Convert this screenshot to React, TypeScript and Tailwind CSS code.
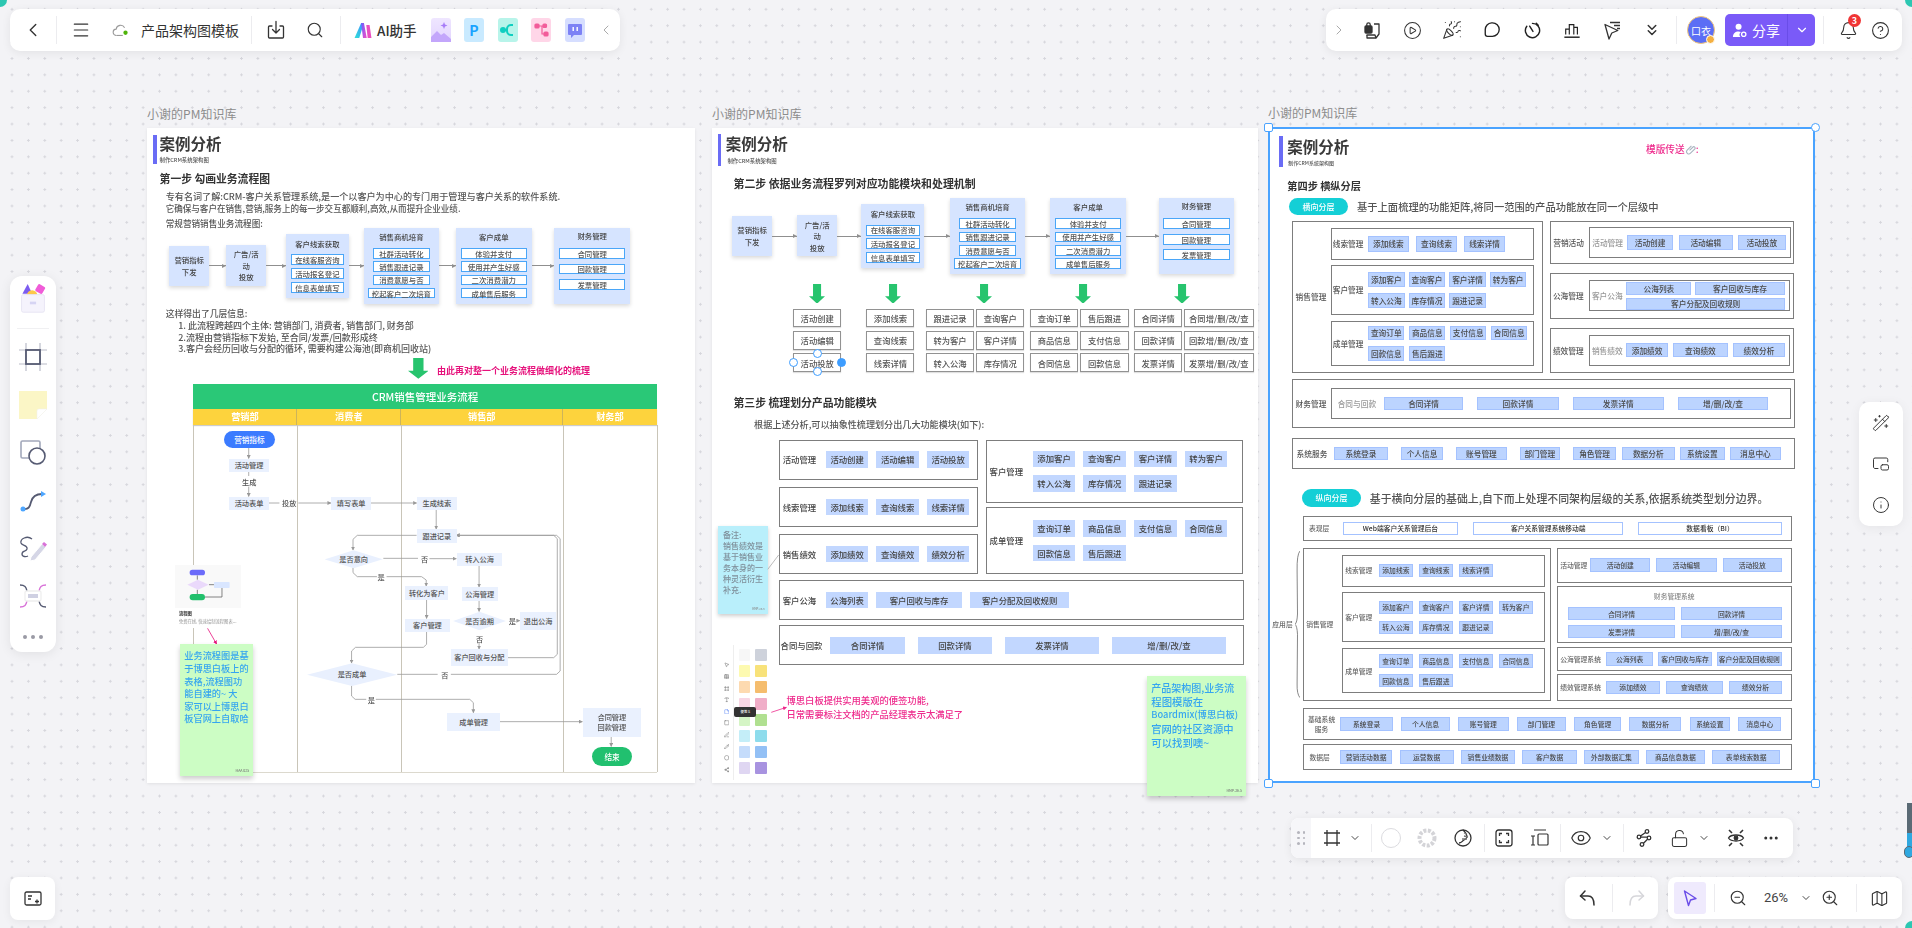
import type { ReactNode } from "react";
import {
  Bell, ChevronDown, ChevronLeft, ChevronRight, ChevronsDown, Circle, CircleHelp, CirclePlay, Ellipsis, Eye, Frame, Info,
  LockOpen, Map as MapIcon, Menu, MousePointer2, PartyPopper, Pencil, PenLine, PictureInPicture2, Search, Share2, Square, StickyNote, Table, Type, WandSparkles, ZoomIn, ZoomOut,
} from "lucide-react";

/* ---------- canvas helpers: only diagram nodes and notes use these ---------- */
type Space = { ox: number; oy: number; sx: number; sy: number };
const laneSpace: Space = { ox: -150 / 2.8, oy: -14 / 3, sx: 2.8, sy: 3 };
const cardSpace: Space = { ox: 12.9, oy: 412, sx: 3, sy: 3 };
const noteSpace: Space = { ox: -6 / 2.851, oy: 262, sx: 2.851, sy: 3 };

const place = (s: Space, r: number[]) => ({
  left: s.ox + r[0] / s.sx,
  top: s.oy + r[1] / s.sy,
  width: (r[2] - r[0]) / s.sx,
  height: (r[3] - r[1]) / s.sy,
});

function N({ s, r, className = "", children }: { s: Space; r: number[]; className?: string; children?: ReactNode }) {
  return (
    <div className={`absolute flex items-center justify-center whitespace-nowrap ${className}`} style={place(s, r)}>
      {children}
    </div>
  );
}

function C({ s, x, y, className = "", children }: { s: Space; x: number; y: number; className?: string; children: ReactNode }) {
  return (
    <div className={`absolute -translate-x-1/2 -translate-y-1/2 whitespace-nowrap ${className}`} style={{ left: s.ox + x / s.sx, top: s.oy + y / s.sy }}>
      {children}
    </div>
  );
}

function Wires({ s, lines, color = "#999", width = 0.8 }: { s: Space; lines: { p: number[]; a?: boolean }[]; color?: string; width?: number }) {
  const id = `arrow-${Math.round(s.oy)}-${color.slice(1)}`;
  return (
    <svg className="absolute left-0 top-0 w-full h-full overflow-visible pointer-events-none">
      <defs>
        <marker id={id} markerWidth="4" markerHeight="4" refX="3.4" refY="2" orient="auto" markerUnits="userSpaceOnUse">
          <path d="M0 0L4 2L0 4z" fill={color} />
        </marker>
      </defs>
      {lines.map((l, i) => {
        const pts: string[] = [];
        for (let k = 0; k < l.p.length; k += 2) pts.push(`${s.ox + l.p[k] / s.sx},${s.oy + l.p[k + 1] / s.sy}`);
        return <polyline key={i} points={pts.join(" ")} fill="none" stroke={color} strokeWidth={width} strokeLinejoin="round" markerEnd={l.a ? `url(#${id})` : undefined} />;
      })}
    </svg>
  );
}

/* ---------- shared frame pieces ---------- */
function DownArrow({ className }: { className: string }) {
  return (
    <svg viewBox="0 0 100 100" preserveAspectRatio="none" className={`shrink-0 ${className}`}>
      <polygon points="25,0 75,0 75,62 100,62 50,100 0,62 25,62" fill="#27c46e" />
    </svg>
  );
}

function Header({ className, bar, gap, title, sub, children }: { className: string; bar: string; gap: string; title: string; sub: string; children?: ReactNode }) {
  return (
    <div className={`flex items-start ${className}`}>
      <div className={`w-[3.600px] shrink-0 bg-[#6a6cf5] ${bar}`} />
      <div className={`flex flex-col ${gap}`}>
        <div className={`flex items-center text-[15.5px] font-bold text-[#3a3a3a] whitespace-nowrap ${title}`}>案例分析</div>
        <div className={`h-2 flex items-center text-[#555] whitespace-nowrap ${sub}`}>制作CRM系统架构图</div>
      </div>
      {children}
    </div>
  );
}

function Link({ w }: { w: string }) {
  return (
    <div className={`relative h-[0.8px] shrink-0 bg-[#8f8f8f] ${w}`}>
      <div className="absolute right-0 top-1/2 -translate-y-1/2 border-l-[4px] border-l-[#8f8f8f] border-y-[2px] border-y-transparent" />
    </div>
  );
}

const flowCard = "bg-[#d6e4ff] shadow-[0_2px_4px_rgba(0,0,0,0.15)]";
const flowSub = "flex items-center justify-center bg-white border-[1.2px] border-[#4aa6f8] whitespace-nowrap";

function FlowRow({ className, gaps }: { className: string; gaps: string[] }) {
  const tall = `${flowCard} w-[75.600px] h-[76px] flex flex-col items-center`;
  return (
    <div className={`flex items-center text-[7.4px] text-[#444] ${className}`}>
      <div className={`${flowCard} w-10 h-[40.300px] flex items-center justify-center text-center leading-[11.5px]`}>营销指标<br />下发</div>
      <Link w={gaps[0]} />
      <div className={`${flowCard} w-[40.500px] h-[41px] flex items-center justify-center text-center leading-[11.5px]`}>广告/活<br />动<br />投放</div>
      <Link w={gaps[1]} />
      <div className={`${flowCard} w-[63.200px] h-[63.700px] flex flex-col items-center gap-[2.700px]`}>
        <div className="h-[17.700px] shrink-0 flex items-center pt-[2px]">客户线索获取</div>
        {["在线客服咨询", "活动报名登记", "信息表单填写"].map((t) => (
          <div key={t} className={`${flowSub} w-[53.300px] h-[11px] text-[#555]`}>{t}</div>
        ))}
      </div>
      <Link w={gaps[2]} />
      <div className={`${tall} gap-[2.500px]`}>
        <div className="h-[18px] shrink-0 flex items-center">销售商机培育</div>
        {["社群活动转化", "销售跟进记录", "消费意愿与否"].map((t) => (
          <div key={t} className={`${flowSub} w-[57.500px] h-[10.700px] text-[#555]`}>{t}</div>
        ))}
        <div className={`${flowSub} w-[66.500px] h-[10.700px] text-[#555]`}>挖起客户二次培育</div>
      </div>
      <Link w={gaps[3]} />
      <div className={`${tall} gap-[2.500px]`}>
        <div className="h-[18px] shrink-0 flex items-center">客户成单</div>
        {["体验并支付", "使用并产生好感", "二次消费潜力", "成单售后服务"].map((t) => (
          <div key={t} className={`${flowSub} w-[66.400px] h-[10.700px] text-[#555]`}>{t}</div>
        ))}
      </div>
      <Link w={gaps[4]} />
      <div className={`${tall} gap-[4.800px]`}>
        <div className="h-[15.700px] shrink-0 flex items-center">财务管理</div>
        {["合同管理", "回款管理", "发票管理"].map((t) => (
          <div key={t} className={`${flowSub} w-[66.400px] h-[10.700px] text-[#555]`}>{t}</div>
        ))}
      </div>
    </div>
  );
}

function Chips({ names, ws, cls, gap }: { names: string; ws: string | string[]; cls: string; gap: string }) {
  return (
    <div className={`flex ${gap}`}>
      {names.split(" ").map((n, i) => (
        <div key={n} className={`flex items-center justify-center shrink-0 whitespace-nowrap ${Array.isArray(ws) ? ws[i] : ws} ${cls}`}>{n}</div>
      ))}
    </div>
  );
}

function Box({ className, label, labelCls, children }: { className: string; label: ReactNode; labelCls: string; children?: ReactNode }) {
  return (
    <div className={`flex items-center shrink-0 bg-white ${className}`}>
      <div className={`shrink-0 whitespace-nowrap ${labelCls}`}>{label}</div>
      {children}
    </div>
  );
}

const FrameLabel = () => <div className="absolute left-0 -top-[23px] text-[12px] text-[#8c8c8c] whitespace-nowrap font-normal">小谢的PM知识库</div>;
const frameBody = "relative h-full flex flex-col blur-[0.3px] font-medium";
const stepCls = "h-[14px] flex items-center font-semibold text-[#333] whitespace-nowrap";

const mod2 = "bg-[#c2d7ff] text-[8.400px] text-[#444]";
const box2 = "border-[1.2px] border-[#7d7d7d]";
const lab2 = "text-[8.400px] text-[#444]";
const fnBox = "h-[18.700px] flex items-center justify-center bg-white border-[1.2px] border-[#929292] shadow-[0_1px_1px_rgba(0,0,0,0.12)] text-[8.300px] text-[#555] whitespace-nowrap";

const box3 = "border border-[#7d7d7d]";
const mod3 = "bg-[#bcd4ff] border border-[#a4c2ff] text-[7.700px] text-[#4a4a4a]";
const mod3b = "bg-[#bcd4ff] border border-[#a4c2ff] text-[6.800px] text-[#4a4a4a]";
const lab3 = "text-[7.700px] text-[#555]";
const lab3g = "text-[7.700px] text-[#999]";
const lab3b = "text-[6.800px] text-[#666]";

/* ---------- first frame: business flow ---------- */
const laneFlow = "bg-[#eaf1fe] text-[7.200px] text-[#555]";
const laneDiamond = "bg-[#e9f0fe] text-[7.200px] text-[#555] [clip-path:polygon(50%_0,100%_50%,50%_100%,0_50%)]";
const laneWord = "text-[7.200px] text-[#555]";

function SwimLane() {
  const s = laneSpace;
  return (
    <div className="relative ml-[46.400px] mt-[5.300px] w-[463.200px] h-[388.700px] flex flex-col border-b border-b-[#dcd9ce]">
      <div className="h-[24.700px] flex items-center justify-center bg-[#2ac877] text-[10.500px] text-white">CRM销售管理业务流程</div>
      <div className="h-[16.300px] grid grid-cols-[103.900px_104px_161.800px_93.500px] bg-[#fdd33d] shadow-[0_1px_1px_rgba(0,0,0,0.2)] text-[9.200px] font-bold text-white">
        <div className="flex items-center justify-center border-r border-r-[#cdb45a]">营销部</div>
        <div className="flex items-center justify-center border-r border-r-[#cdb45a]">消费者</div>
        <div className="flex items-center justify-center border-r border-r-[#cdb45a]">销售部</div>
        <div className="flex items-center justify-center">财务部</div>
      </div>
      <div className="flex-1 grid grid-cols-[103.900px_104px_161.800px_93.500px] border-l border-l-[#c9c5b8]">
        <div className="border-r border-r-[#c9c5b8]" />
        <div className="border-r border-r-[#c9c5b8]" />
        <div className="border-r border-r-[#c9c5b8]" />
        <div className="border-r border-r-[#c9c5b8]" />
      </div>
      <Wires
        s={s}
        lines={[
          { p: [306, 206, 306, 237], a: true }, { p: [306, 277, 306, 290] }, { p: [306, 322, 306, 351], a: true },
          { p: [361, 371, 392, 371] }, { p: [445, 371, 536, 371], a: true }, { p: [647, 371, 776, 371], a: true },
          { p: [831, 391, 831, 449], a: true }, { p: [776, 468, 610, 468, 598, 480, 598, 512], a: true },
          { p: [683, 537, 780, 537] }, { p: [812, 538, 887, 538], a: true }, { p: [951, 559, 951, 623], a: true },
          { p: [598, 566, 598, 580, 610, 592, 665, 592] }, { p: [692, 592, 790, 592, 803, 602, 803, 620], a: true },
          { p: [951, 664, 951, 696], a: true }, { p: [804, 660, 804, 717], a: true }, { p: [1057, 724, 1065, 724], a: true },
          { p: [951, 790, 951, 809], a: true }, { p: [804, 758, 804, 795, 795, 804, 605, 804, 594, 815, 594, 851], a: true },
          { p: [1030, 835, 1160, 835, 1170, 825, 1170, 478, 1160, 468, 887, 468], a: true },
          { p: [722, 885, 835, 885] }, { p: [872, 885, 1168, 885, 1178, 875, 1178, 478, 1168, 468, 887, 468], a: true },
          { p: [594, 919, 594, 950, 604, 960, 635, 960] }, { p: [662, 960, 925, 960, 935, 970, 935, 1000], a: true },
          { p: [1009, 1027, 1240, 1027], a: true }, { p: [1321, 1072, 1321, 1101], a: true },
        ]}
      />
      <N s={s} r={[236, 155, 377, 206]} className="bg-[#3b7bff] rounded-full text-[7.600px] text-white">营销指标</N>
      <N s={s} r={[250, 237, 361, 277]} className={laneFlow}>活动管理</N>
      <C s={s} x={306} y={307} className={laneWord}>生成</C>
      <N s={s} r={[250, 351, 361, 391]} className={laneFlow}>活动表单</N>
      <C s={s} x={418} y={371} className={laneWord}>投放</C>
      <N s={s} r={[536, 351, 647, 391]} className={laneFlow}>填写表单</N>
      <N s={s} r={[776, 351, 887, 391]} className={laneFlow}>生成线索</N>
      <N s={s} r={[776, 449, 887, 489]} className={laneFlow}>跟进记录</N>
      <N s={s} r={[517, 512, 680, 566]} className={laneDiamond}>是否意向</N>
      <C s={s} x={797} y={538} className={laneWord}>否</C>
      <N s={s} r={[887, 519, 1015, 559]} className={laneFlow}>转入公海</N>
      <C s={s} x={675} y={592} className={laneWord}>是</C>
      <N s={s} r={[743, 620, 864, 660]} className={laneFlow}>转化为客户</N>
      <N s={s} r={[901, 623, 1002, 664]} className={laneFlow}>公海管理</N>
      <N s={s} r={[877, 696, 1025, 752]} className={laneDiamond}>是否逾期</N>
      <C s={s} x={1043} y={724} className={laneWord}>是</C>
      <N s={s} r={[1065, 696, 1165, 752]} className={laneFlow}>退出公海</N>
      <C s={s} x={951} y={778} className={laneWord}>否</C>
      <N s={s} r={[743, 717, 867, 758]} className={laneFlow}>客户管理</N>
      <N s={s} r={[871, 809, 1030, 860]} className={laneFlow}>客户回收与分配</N>
      <N s={s} r={[468, 851, 720, 919]} className={laneDiamond}>是否成单</N>
      <C s={s} x={854} y={885} className={laneWord}>否</C>
      <C s={s} x={648} y={960} className={laneWord}>是</C>
      <N s={s} r={[860, 1000, 1009, 1055]} className={laneFlow}>成单管理</N>
      <N s={s} r={[1240, 984, 1403, 1072]} className={`${laneFlow} text-center leading-[10.500px]`}>合同管理<br />回款管理</N>
      <N s={s} r={[1267, 1101, 1377, 1160]} className="bg-[#21c06f] rounded-[10px] text-[7.600px] text-white">结束</N>
    </div>
  );
}

function FrameOne() {
  return (
    <div className="absolute left-[147.100px] top-[128px] w-[547.500px] h-[655px] bg-white shadow-[0_1px_3px_rgba(0,0,0,0.08)]">
      <FrameLabel />
      <div className={frameBody}>
        <Header className="ml-[6.100px] mt-[7px] gap-[2.800px]" bar="h-[29.300px]" gap="gap-[4.400px]" title="h-[16.600px]" sub="text-[5.400px]" />
        <div className={`${stepCls} ml-[12.500px] mt-[7px] text-[10.800px]`}>第一步 勾画业务流程图</div>
        <div className="ml-[18.600px] mt-[4.700px] flex flex-col text-[#555] whitespace-nowrap leading-[12px]">
          <div className="text-[9.100px]">专有名词了解:CRM-客户关系管理系统,是一个以客户为中心的专门用于管理与客户关系的软件系统.</div>
          <div className="text-[8.550px]">它确保与客户在销售,营销,服务上的每一步交互都顺利,高效,从而提升企业业绩.</div>
        </div>
        <div className="ml-[18.600px] mt-[5.700px] h-2 flex items-center text-[8.600px] text-[#555] whitespace-nowrap">常规营销销售业务流程图:</div>
        <FlowRow className="ml-[22.100px]" gaps={["w-[16.800px]", "w-[19.300px]", "w-[14.600px]", "w-[16.800px]", "w-[22.900px]"]} />
        <div className="ml-[18.600px] mt-[5px] h-[10px] flex items-center text-[8.800px] text-[#555] whitespace-nowrap">这样得出了几层信息:</div>
        <div className="ml-[31.100px] mt-[1.100px] flex flex-col text-[9px] leading-[11.800px] text-[#555] whitespace-nowrap">
          <div>1. 此流程跨越四个主体: 营销部门, 消费者, 销售部门, 财务部</div>
          <div>2.流程由营销指标下发始, 至合同/发票/回款形成终</div>
          <div>3.客户会经历回收与分配的循环, 需要构建公海池(即商机回收站)</div>
        </div>
        <div className="ml-[260.700px] mt-[3.200px] flex items-center gap-[8.600px]">
          <DownArrow className="w-[20.700px] h-[20.700px]" />
          <div className="mt-[5px] text-[9px] font-bold text-[#e6127c] whitespace-nowrap">由此再对整一个业务流程做细化的梳理</div>
        </div>
        <SwimLane />

        {/* pasted template card, lies over the lane */}
        <div className="absolute left-[26.200px] top-[437.300px] w-[70px] h-[63px] bg-white flex flex-col items-center">
          <svg viewBox="0 0 199 128" className="w-[66.300px] h-[42.700px] shrink-0 bg-[#f9f9f9]">
            <path d="M67 31V44M67 74V87M102 59H117M141 69V96H90" fill="none" stroke="#666" strokeWidth="2.400" />
            <rect x="44" y="14" width="46" height="17" rx="8" fill="#6c6cfa" />
            <polygon points="69,44 101,59 69,74 37,59" fill="#ead9fb" />
            <rect x="117" y="51" width="47" height="18" rx="2" fill="#d9e6ff" />
            <rect x="44" y="87" width="46" height="19" rx="9" fill="#22c06c" />
          </svg>
          <div className="self-start ml-[5.600px] mt-[3.500px] text-[4.300px] leading-[5px] font-bold text-[#333]">流程图</div>
          <div className="self-start ml-[5.600px] mt-[3px] text-[4.300px] leading-[5px] text-[#aaa] whitespace-nowrap">免费在线, 快速绘制流程图表...</div>
        </div>
        <Wires s={cardSpace} color="#e6127c" lines={[{ p: [143, 265, 170, 312], a: true }]} />
        <div className="absolute left-[32.900px] top-[516.300px] w-[73.300px] h-[131.700px] bg-[#ccfdc4] shadow-[0_3px_5px_rgba(0,0,0,0.2)] flex flex-col pl-[4.300px] pt-[5.200px] text-[9.200px] leading-[12.600px] text-[#35a5f0]">
          <div>业务流程图是基</div>
          <div>于博思白板上的</div>
          <div>表格,流程图功</div>
          <div>能自建的~ 大</div>
          <div>家可以上博思白</div>
          <div>板官网上自取哈</div>
          <div className="mt-auto self-end mr-[4px] mb-[3px] text-[3.500px] leading-[4px] text-[#777]">HAA 025</div>
        </div>
      </div>
    </div>
  );
}

/* ---------- second frame: modules ---------- */
function FnColumn({ names, w }: { names: string; w: string }) {
  return (
    <div className={`flex flex-col gap-[3.700px] ${w}`}>
      {names.split(" ").map((n) => (
        <div key={n} className={fnBox}>{n}</div>
      ))}
    </div>
  );
}

const paletteTools = [MousePointer2, Table, Frame, Type, StickyNote, Square, PenLine, Pencil, Circle, Share2];
const swatches = [
  "bg-[#f7f7f7]", "bg-[#ced2db]", "bg-[#fdfab0]", "bg-[#f8e27a]", "bg-[#fddab0]", "bg-[#f5bd6e]", "bg-[#f8d6e4]", "bg-[#f0aec8]",
  "bg-[#d5f5c5]", "bg-[#b0e090]", "bg-[#c4eef8]", "bg-[#8edcec]", "bg-[#c5dcfb]", "bg-[#93c0f5]", "bg-[#dfd6f2]", "bg-[#a893e0]",
];

function Handle({ className }: { className: string }) {
  return <div className={`absolute w-[9px] h-[9px] rounded-full border border-[#3d9dff] ${className}`} />;
}

function FrameTwo() {
  const chip3 = `${mod2} h-[16.300px]`;
  return (
    <div className="absolute left-[712.100px] top-[128px] w-[546px] h-[655px] bg-white shadow-[0_1px_3px_rgba(0,0,0,0.08)]">
      <FrameLabel />
      <div className={frameBody}>
        <Header className="ml-[5.600px] mt-[6.300px] gap-[4.500px]" bar="h-[31.700px]" gap="gap-[3px]" title="h-[19.400px]" sub="text-[5.400px] ml-[1.700px]" />
        <div className={`${stepCls} ml-[21.400px] mt-[9.700px] text-[10.900px]`}>第二步 依据业务流程罗列对应功能模块和处理机制</div>
        <FlowRow className="ml-5 mt-[8.300px]" gaps={["w-[24.900px]", "w-[23.800px]", "w-[25.300px]", "w-[25px]", "w-[32.600px]"]} />

        <div className="ml-[81.400px] mt-[9.700px] flex items-start">
          <div className="flex flex-col gap-[5.300px]">
            <DownArrow className="ml-[15.400px] w-[16.100px] h-[19.700px]" />
            <div className="relative w-[47.400px]">
              <FnColumn names="活动创建 活动编辑 活动投放" w="w-[47.400px]" />
              <Handle className="left-[19.500px] top-[40.300px] bg-white" />
              <Handle className="-left-[4.500px] top-[49.800px] bg-white" />
              <Handle className="-right-[5px] top-[49.800px] bg-[#3d9dff]" />
              <Handle className="left-[19.500px] top-[58.700px] bg-white" />
            </div>
          </div>
          <div className="ml-[25.600px] flex flex-col gap-[5.300px]">
            <DownArrow className="ml-[18.600px] w-[16.100px] h-[19.700px]" />
            <FnColumn names="添加线索 查询线索 线索详情" w="w-[48px]" />
          </div>
          <div className="ml-[11.900px] flex flex-col gap-[5.300px]">
            <DownArrow className="ml-[49.800px] w-[16.100px] h-[19.700px]" />
            <div className="flex gap-[2.500px]">
              <FnColumn names="跟进记录 转为客户 转入公海" w="w-[47.400px]" />
              <FnColumn names="查询客户 客户详情 库存情况" w="w-[48px]" />
            </div>
          </div>
          <div className="ml-[6px] flex flex-col gap-[5.300px]">
            <DownArrow className="ml-[44.500px] w-[16.100px] h-[19.700px]" />
            <div className="flex gap-[2.100px]">
              <FnColumn names="查询订单 商品信息 合同信息" w="w-[48px]" />
              <FnColumn names="售后跟进 支付信息 回款信息" w="w-[48.400px]" />
            </div>
          </div>
          <div className="ml-[5.600px] flex flex-col gap-[5.300px]">
            <DownArrow className="ml-10 w-[16.100px] h-[19.700px]" />
            <div className="flex gap-[2.100px]">
              <FnColumn names="合同详情 回款详情 发票详情" w="w-[47.700px]" />
              <FnColumn names="合同增/删/改/查 回款增/删/改/查 发票增/删/改/查" w="w-[69.400px]" />
            </div>
          </div>
        </div>

        <div className={`${stepCls} ml-[21.400px] mt-[23.500px] text-[10.850px]`}>第三步 梳理划分产品功能模块</div>
        <div className="ml-[42px] mt-[9.600px] h-3 flex items-center text-[9.100px] text-[#555] whitespace-nowrap">根据上述分析,可以抽象性梳理划分出几大功能模块(如下):</div>

        <div className="ml-[66.600px] mt-[8.400px] flex gap-2">
          <div className="w-[198.900px] flex flex-col gap-[7.300px]">
            {[["活动管理", "活动创建 活动编辑 活动投放"], ["线索管理", "添加线索 查询线索 线索详情"], ["销售绩效", "添加绩效 查询绩效 绩效分析"]].map((m) => (
              <Box key={m[0]} className={`h-10 ${box2} pl-[3px]`} label={m[0]} labelCls={`w-[43.200px] ${lab2}`}>
                <Chips names={m[1]} ws="w-[42.500px]" cls={chip3} gap="gap-2" />
              </Box>
            ))}
          </div>
          <div className="w-[257.800px] flex flex-col gap-[4.700px]">
            <Box className={`h-[63px] ${box2} pl-[3px]`} label="客户管理" labelCls={`w-[43.200px] ${lab2}`}>
              <div className="flex flex-col gap-[8.300px]">
                <Chips names="添加客户 查询客户 客户详情 转为客户" ws="w-[42.500px]" cls={chip3} gap="gap-[8.200px]" />
                <Chips names="转入公海 库存情况 跟进记录" ws="w-[42.500px]" cls={chip3} gap="gap-[8.200px]" />
              </div>
            </Box>
            <Box className={`h-[67px] ${box2} pl-[3px]`} label="成单管理" labelCls={`w-[43.200px] ${lab2}`}>
              <div className="flex flex-col gap-[8px]">
                <Chips names="查询订单 商品信息 支付信息 合同信息" ws="w-[42.500px]" cls={chip3} gap="gap-[8.200px]" />
                <Chips names="回款信息 售后跟进" ws="w-[42.500px]" cls={chip3} gap="gap-[8.200px]" />
              </div>
            </Box>
          </div>
        </div>
        <Box className={`ml-[66.600px] mt-[6px] w-[465.500px] h-10 ${box2} pl-[3px]`} label="客户公海" labelCls={`w-[43.200px] ${lab2}`}>
          <Chips names="公海列表 客户回收与库存 客户分配及回收规则" ws={["w-[42.400px]", "w-[85.200px]", "w-[99.600px]"]} cls={chip3} gap="gap-[8.200px]" />
        </Box>
        <Box className={`ml-[66.600px] mt-[5px] w-[465.500px] h-10 ${box2} pl-[0.900px]`} label="合同与回款" labelCls={`w-[49.800px] ${lab2}`}>
          <Chips names="合同详情 回款详情 发票详情 增/删/改/查" ws={["w-[74.400px]", "w-[74.400px]", "w-[93.700px]", "w-[114.300px]"]} cls={`${mod2} h-[17px]`} gap="gap-[13px]" />
        </Box>

        {/* notes pinned on the board */}
        <div className="absolute left-[6px] top-[397.700px] w-[49.800px] h-[88.300px] bg-[#b9effb] shadow-[0_2px_4px_rgba(0,0,0,0.2)] flex flex-col pl-[4.900px] pt-[4.500px] text-[8px] leading-[10.900px] text-[#7f8f9a] whitespace-nowrap">
          <div>备注:</div>
          <div>销售绩效是</div>
          <div>基于销售业</div>
          <div>务本身的一</div>
          <div>种灵活衍生</div>
          <div>补充.</div>
          <div className="mt-auto self-end mr-[3px] mb-[3px] text-[2.800px] leading-[3px] text-[#888]">HMP-26.5</div>
        </div>
        <Wires s={noteSpace} color="#aaa" lines={[{ p: [165, 538, 196, 495] }]} />

        <div className="absolute left-[8.400px] top-[517px] w-[50px] h-[135px] bg-white flex">
          <div className="relative w-[13.300px] border-r border-r-[#eee] flex flex-col items-center pt-[17.200px] gap-[6.170px] text-[#666]">
            {paletteTools.map((Icon, i) => (
              <Icon key={i} size={5.5} strokeWidth={2} className={i === 4 ? "text-[#4a7bf5]" : ""} />
            ))}
            <div className="absolute left-[14px] top-[62.300px] w-[21.700px] h-[9.300px] bg-[#333] rounded-[2px] flex items-center justify-center text-[3.400px] text-white whitespace-nowrap z-10">便签 S</div>
          </div>
          <div className="grid grid-cols-[11.500px_11.500px] auto-rows-[12px] gap-x-[4.900px] gap-y-[4.200px] pl-[4.900px] pt-1">
            {swatches.map((c) => (
              <div key={c} className={`${c} rounded-[1px]`} />
            ))}
          </div>
        </div>

        <Wires s={noteSpace} color="#ee2a8c" lines={[{ p: [175, 967, 218, 952], a: true }]} />
        <div className="absolute left-[74.400px] top-[565px] flex flex-col text-[9.300px] leading-[14px] text-[#ee2a8c] whitespace-nowrap">
          <div>博思白板提供实用美观的便签功能,</div>
          <div>日常需要标注文档的产品经理表示太满足了</div>
        </div>

        <div className="absolute left-[435px] top-[548px] w-[98.900px] h-[120px] bg-[#ccfdc4] shadow-[0_3px_5px_rgba(0,0,0,0.2)] flex flex-col pl-[4.200px] pt-[4.800px] leading-[13.700px] text-[#35a5f0] whitespace-nowrap">
          <div className="text-[10px]">产品架构图,业务流</div>
          <div className="text-[10.400px]">程图模版在</div>
          <div className="text-[9.300px]">Boardmix(博思白板)</div>
          <div className="text-[10.300px]">官网的社区资源中</div>
          <div className="text-[10.400px]">可以找到噢~</div>
          <div className="mt-auto self-end mr-[4px] mb-[3px] text-[3.400px] leading-[4px] text-[#777]">HMP-26.5</div>
        </div>
      </div>
    </div>
  );
}

/* ---------- third frame: layers ---------- */
function FrameThree() {
  const corner = "absolute w-[9px] h-[9px] bg-white border border-[#4aa3ff]";
  return (
    <div className="absolute left-[1268px] top-[127.300px] w-[547px] h-[656px] bg-white">
      <FrameLabel />
      <div className={frameBody}>
        <Header className="ml-[11px] mt-[9px] gap-[4.700px]" bar="h-[31px]" gap="gap-[2px]" title="h-5" sub="text-[5px] ml-px">
          <div className="ml-[292px] mt-[6px] flex items-center text-[9.700px] text-[#ee2a8c] whitespace-nowrap">
            模版传送
            <svg viewBox="0 0 12 12" className="w-[11px] h-[11px]" fill="none" stroke="#a8b4c0" strokeWidth="1.2">
              <path d="M5 7l4-4a1.6 1.6 0 0 1 2 2L6 10a2.4 2.4 0 0 1-3.6-3.3L7 2" />
            </svg>
            :
          </div>
        </Header>
        <div className={`${stepCls} ml-[19.300px] mt-[11px] text-[10.200px]`}>第四步 横纵分层</div>
        <div className="ml-[20.700px] mt-[6px] flex items-center gap-[8.700px]">
          <div className="w-[59.600px] h-[17px] rounded-full bg-[#14cfd6] flex items-center justify-center text-[8px] text-white">横向分层</div>
          <div className="text-[10.300px] text-[#555] whitespace-nowrap">基于上面梳理的功能矩阵,将同一范围的产品功能放在同一个层级中</div>
        </div>

        <div className="ml-6 mt-[5.300px] flex gap-[6.500px]">
          <Box className={`w-[251.400px] h-[152.700px] ${box3} pl-[2.600px]`} label="销售管理" labelCls={`w-[35px] ${lab3}`}>
            <div className="flex flex-col gap-[5.700px]">
              <Box className={`w-[203.600px] h-[31.700px] ${box3} pl-[1.100px]`} label="线索管理" labelCls={`w-[35.400px] ${lab3}`}>
                <Chips names="添加线索 查询线索 线索详情" ws="w-[40.600px]" cls={`${mod3} h-[16.300px]`} gap="gap-[7.500px]" />
              </Box>
              <Box className={`w-[203.600px] h-[49.700px] ${box3} pl-[1.100px]`} label="客户管理" labelCls={`w-[35.400px] ${lab3}`}>
                <div className="flex flex-col gap-[6.300px]">
                  <Chips names="添加客户 查询客户 客户详情 转为客户" ws="w-[36.600px]" cls={`${mod3} h-[14.700px]`} gap="gap-[4px]" />
                  <Chips names="转入公海 库存情况 跟进记录" ws="w-[36.600px]" cls={`${mod3} h-[14.700px]`} gap="gap-[4px]" />
                </div>
              </Box>
              <Box className={`w-[203.600px] h-[45.300px] ${box3} pl-[1.100px]`} label="成单管理" labelCls={`w-[35.400px] ${lab3}`}>
                <div className="flex flex-col gap-[6.300px]">
                  <Chips names="查询订单 商品信息 支付信息 合同信息" ws="w-[36.400px]" cls={`${mod3} h-[14.300px]`} gap="gap-[4.600px]" />
                  <Chips names="回款信息 售后跟进" ws="w-[36.400px]" cls={`${mod3} h-[14.300px]`} gap="gap-[4.600px]" />
                </div>
              </Box>
            </div>
          </Box>
          <div className="w-[244.600px] h-[152.700px] flex flex-col justify-between">
            <Box className={`h-[43.700px] ${box3} pl-[2.300px]`} label="营销活动" labelCls={`w-[36px] ${lab3}`}>
              <Box className={`w-[201.500px] h-[31.700px] ${box3} pl-[2px]`} label="活动管理" labelCls={`w-[34.500px] ${lab3g}`}>
                <Chips names="活动创建 活动编辑 活动投放" ws={["w-[46.800px]", "w-[53.600px]", "w-[47.500px]"]} cls={`${mod3} h-[15px]`} gap="gap-[5.500px]" />
              </Box>
            </Box>
            <Box className={`h-[46px] ${box3} pl-[2px]`} label="公海管理" labelCls={`w-[36px] ${lab3}`}>
              <Box className={`w-[201.500px] h-[31px] ${box3} pl-[2px]`} label="客户公海" labelCls={`w-[34.500px] ${lab3g}`}>
                <div className="flex flex-col gap-[2.700px]">
                  <Chips names="公海列表 客户回收与库存" ws={["w-[65px]", "w-[90px]"]} cls={`${mod3} h-[13.300px]`} gap="gap-[3.600px]" />
                  <Chips names="客户分配及回收规则" ws="w-[158.600px]" cls={`${mod3} h-[11.700px]`} gap="gap-0" />
                </div>
              </Box>
            </Box>
            <Box className={`h-[45.700px] ${box3} pl-[2px]`} label="绩效管理" labelCls={`w-[36px] ${lab3}`}>
              <Box className={`w-[201.500px] h-[31.700px] ${box3} pl-[2px]`} label="销售绩效" labelCls={`w-[34.500px] ${lab3g}`}>
                <Chips names="添加绩效 查询绩效 绩效分析" ws={["w-[41.400px]", "w-[54.300px]", "w-[51.800px]"]} cls={`${mod3} h-[14px]`} gap="gap-[5.500px]" />
              </Box>
            </Box>
          </div>
        </div>

        <Box className={`ml-6 mt-[5.300px] w-[502.500px] h-[49.700px] ${box3} pl-[2.600px]`} label="财务管理" labelCls={`w-[35.700px] ${lab3}`}>
          <Box className={`w-[459.300px] h-[31.300px] ${box3} pl-[5.400px]`} label="合同与回款" labelCls={`w-[46.100px] ${lab3g}`}>
            <Chips names="合同详情 回款详情 发票详情 增/删/改/查" ws={["w-[79.600px]", "w-[81.800px]", "w-[91.400px]", "w-[90.700px]"]} cls={`${mod3} h-[13.700px]`} gap="gap-[13.700px]" />
          </Box>
        </Box>
        <Box className={`ml-6 mt-[9.300px] w-[502.500px] h-[31.700px] ${box3} pl-[3.600px]`} label="系统服务" labelCls={`w-[37.400px] ${lab3}`}>
          <div className="flex gap-[5.700px]">
            <Chips names="系统登录 个人信息 账号管理 部门管理 角色管理" ws={["w-[54px]", "w-[42.500px]", "w-[50.700px]", "w-[40.400px]", "w-[43.600px]"]} cls={`${mod3} h-[13.700px]`} gap="gap-[12.800px]" />
            <Chips names="数据分析 系统设置 消息中心" ws={["w-[52.500px]", "w-[44.300px]", "w-[50.400px]"]} cls={`${mod3} h-[13.700px]`} gap="gap-[5.700px]" />
          </div>
        </Box>

        <div className="ml-[33.600px] mt-[20px] flex items-center gap-[8.600px]">
          <div className="w-[59.600px] h-[17.300px] rounded-full bg-[#14cfd6] flex items-center justify-center text-[8px] text-white">纵向分层</div>
          <div className="text-[10.900px] text-[#555] whitespace-nowrap">基于横向分层的基础上,自下而上处理不同架构层级的关系,依据系统类型划分边界。</div>
        </div>
        <Box className={`ml-[34.600px] mt-[9.700px] w-[489.300px] h-[24.300px] ${box3} pl-[5.400px]`} label="表现层" labelCls={`w-[33.600px] ${lab3b}`}>
          <Chips names="Web端客户关系管理后台 客户关系管理系统移动端 数据看板（BI）" ws={["w-[115.700px]", "w-[150.400px]", "w-[143.600px]"]} cls="bg-white border-[1.2px] border-[#a4c2ff] text-[6.800px] text-[#333] h-[13.300px]" gap="gap-[14.800px]" />
        </Box>

        <div className="ml-[4.300px] mt-[7px] flex items-center">
          <div className={`w-[22.700px] ${lab3b} whitespace-nowrap`}>应用层</div>
          <svg viewBox="0 0 5 147" className="w-[5px] h-[147px]" fill="none" stroke="#555" strokeWidth="0.7">
            <path d="M5 0Q1.800 3.300 2.100 20L2.500 63Q2.100 71.700 0 73.300Q2.100 75 2.500 83.300L2.100 133Q1.800 143 5 146.700" />
          </svg>
          <Box className={`ml-[2.600px] w-[248.200px] h-[153px] ${box3} pl-[2.600px]`} label="销售管理" labelCls={`w-[35.800px] ${lab3b}`}>
            <div className="flex flex-col gap-[5.800px]">
              <Box className={`w-[203.200px] h-8 ${box3} pl-[2.200px]`} label="线索管理" labelCls={`w-[33.600px] ${lab3b}`}>
                <Chips names="添加线索 查询线索 线索详情" ws="w-[34.300px]" cls={`${mod3b} h-[13.500px]`} gap="gap-[5.700px]" />
              </Box>
              <Box className={`w-[203.200px] h-[50px] ${box3} pl-[2.200px]`} label="客户管理" labelCls={`w-[33.600px] ${lab3b}`}>
                <div className="flex flex-col gap-[6.300px]">
                  <Chips names="添加客户 查询客户 客户详情 转为客户" ws="w-[34.300px]" cls={`${mod3b} h-[13.500px]`} gap="gap-[5.700px]" />
                  <Chips names="转入公海 库存情况 跟进记录" ws="w-[34.300px]" cls={`${mod3b} h-[13.500px]`} gap="gap-[5.700px]" />
                </div>
              </Box>
              <Box className={`w-[203.200px] h-[45.300px] ${box3} pl-[2.200px]`} label="成单管理" labelCls={`w-[33.600px] ${lab3b}`}>
                <div className="flex flex-col gap-[6.300px]">
                  <Chips names="查询订单 商品信息 支付信息 合同信息" ws="w-[34.300px]" cls={`${mod3b} h-[13.500px]`} gap="gap-[5.700px]" />
                  <Chips names="回款信息 售后跟进" ws="w-[34.300px]" cls={`${mod3b} h-[13.500px]`} gap="gap-[5.700px]" />
                </div>
              </Box>
            </div>
          </Box>
          <div className="ml-[5.800px] w-[235.400px] h-[153px] flex flex-col justify-between">
            <Box className={`h-[35px] ${box3} pl-[2.600px]`} label="活动管理" labelCls={`w-[30.300px] ${lab3b}`}>
              <Chips names="活动创建 活动编辑 活动投放" ws={["w-[59.600px]", "w-[61.800px]", "w-[58.900px]"]} cls={`${mod3b} h-[13.700px]`} gap="gap-[5.500px]" />
            </Box>
            <div className={`h-[57.300px] shrink-0 bg-white ${box3} flex flex-col items-center pt-[5.200px]`}>
              <div className="h-[9px] flex items-center text-[6.800px] text-[#888]">财务管理系统</div>
              <div className="mt-[6px] flex flex-col gap-[4.700px] self-start ml-[10.800px]">
                <Chips names="合同详情 回款详情" ws={["w-[106.400px]", "w-[100.700px]"]} cls={`${mod3b} h-[13.300px]`} gap="gap-[6.400px]" />
                <Chips names="发票详情 增/删/改/查" ws={["w-[106.400px]", "w-[100.700px]"]} cls={`${mod3b} h-[13.300px]`} gap="gap-[6.400px]" />
              </div>
            </div>
            <Box className={`h-[24.300px] ${box3} pl-[2.600px]`} label="公海管理系统" labelCls={`w-[46px] ${lab3b}`}>
              <Chips names="公海列表 客户回收与库存 客户分配及回收规则" ws={["w-[47.100px]", "w-[54.600px]", "w-[64.600px]"]} cls={`${mod3b} h-[13.700px]`} gap="gap-[4.600px]" />
            </Box>
            <Box className={`h-[26.300px] ${box3} pl-[2.600px]`} label="绩效管理系统" labelCls={`w-[46px] ${lab3b}`}>
              <Chips names="添加绩效 查询绩效 绩效分析" ws={["w-[53.600px]", "w-[57.100px]", "w-[52.500px]"]} cls={`${mod3b} h-[13.700px]`} gap="gap-[6.200px]" />
            </Box>
          </div>
        </div>

        <Box className={`ml-[34.600px] mt-[7.300px] w-[489.300px] h-[31.700px] ${box3} pl-[3.600px]`} label={<>基础系统<br />服务</>} labelCls={`w-[32.900px] text-center leading-[10px] pr-[4px] ${lab3b}`}>
          <Chips names="系统登录 个人信息 账号管理 部门管理 角色管理 数据分析 系统设置 消息中心" ws={["w-[53.200px]", "w-[48.200px]", "w-[51px]", "w-[48.900px]", "w-[47.100px]", "w-[52.100px]", "w-[40.400px]", "w-[43.200px]"]} cls={`${mod3b} h-[13.700px]`} gap="gap-[8.200px]" />
        </Box>
        <Box className={`ml-[34.600px] mt-[4.700px] w-[489.300px] h-[26px] ${box3} pl-[5.800px]`} label="数据层" labelCls={`w-[30.700px] ${lab3b}`}>
          <Chips names="营销活动数据 运营数据 销售业绩数据 客户数据 外部数据汇集 商品信息数据 表单线索数据" ws={["w-[52.100px]", "w-[53.900px]", "w-[53.900px]", "w-[54.300px]", "w-[54.300px]", "w-[58.600px]", "w-[68.200px]"]} cls={`${mod3b} h-[13.700px]`} gap="gap-[7.500px]" />
        </Box>
      </div>
      {/* selection outline */}
      <div className="absolute inset-0 border-2 border-[#4aa3ff] pointer-events-none" />
      <div className={`${corner} -left-[4.500px] -top-[4.500px] rounded-[2px]`} />
      <div className={`${corner} -right-[4.500px] -top-[4.500px] rounded-full`} />
      <div className={`${corner} -left-[4.500px] -bottom-[4.500px] rounded-[2px]`} />
      <div className={`${corner} -right-[4.500px] -bottom-[4.500px] rounded-[2px]`} />
    </div>
  );
}

/* ---------- app chrome ---------- */
const Divider = () => <div className="w-px h-[28px] bg-[#ececef] shrink-0" />;
const bar = "flex items-center bg-white shadow-[0_2px_10px_rgba(0,0,0,0.07)]";
const tile = "w-5 h-6 rounded-[3px] flex items-center justify-center shrink-0";

function TopLeftBar() {
  return (
    <div className={`absolute left-[10px] top-[9px] w-[610px] h-[42px] rounded-[10px] text-[#333] ${bar}`}>
      <div className="w-[46px] flex justify-center"><ChevronLeft size={22} strokeWidth={1.5} /></div>
      <Divider />
      <div className="flex items-center pl-[14px] pr-3 gap-[21px]">
        <Menu size={20} strokeWidth={1.4} />
        <div className="flex items-center gap-[11px]">
          <svg viewBox="0 0 20 16" className="w-[18px] h-[15px]" fill="none">
            <path d="M5 13.5a3.5 3.5 0 0 1-.4-7A5 5 0 0 1 14 5" stroke="#9a9a9a" strokeWidth="1.2" />
            <path d="M5 13.5h7" stroke="#9a9a9a" strokeWidth="1.2" />
            <circle cx="15" cy="10.5" r="2.4" fill="#4fb40a" />
          </svg>
          <div className="w-[98px] text-[14px] whitespace-nowrap">产品架构图模板</div>
        </div>
      </div>
      <Divider />
      <div className="flex items-center pl-[14px] pr-4 gap-5">
        <svg viewBox="0 0 20 20" className="w-5 h-5" fill="none" stroke="#333" strokeWidth="1.3" strokeLinecap="round" strokeLinejoin="round">
          <path d="M6 6H3.5a1 1 0 0 0-1 1v10a1 1 0 0 0 1 1h13a1 1 0 0 0 1-1V7a1 1 0 0 0-1-1H14" />
          <path d="M10 1.5V13M6.5 9.5 10 13l3.5-3.5" />
        </svg>
        <Search size={18} strokeWidth={1.5} />
      </div>
      <Divider />
      <div className="flex items-center pl-[13px] gap-[13.500px]">
        <div className="flex items-center gap-[5px]">
          <svg viewBox="0 0 18 16" className="w-[18px] h-[15px] shrink-0">
            <defs>
              <linearGradient id="ai-a" x1="0" y1="1" x2="1" y2="0">
                <stop offset="0" stopColor="#2fe0d8" />
                <stop offset="1" stopColor="#3c8dff" />
              </linearGradient>
              <linearGradient id="ai-b" x1="0" y1="0" x2="1" y2="1">
                <stop offset="0" stopColor="#6b5cff" />
                <stop offset="1" stopColor="#f24fc8" />
              </linearGradient>
            </defs>
            <path d="M0 16 7 0h3L5 16z" fill="url(#ai-a)" />
            <path d="M7 0h3l3 16H9z" fill="url(#ai-b)" />
            <path d="M12.5 2H16l2 14h-4z" fill="#e94fc0" />
          </svg>
          <div className="w-[40px] text-[13.500px] whitespace-nowrap font-medium">AI助手</div>
        </div>
        <div className={`${tile} bg-gradient-to-b from-[#efe6ff] to-[#e2d4ff]`}>
          <svg viewBox="0 0 20 24" className="w-5 h-6">
            <path d="M0 24v-5l6-6 4 4 3-2 7 6v3z" fill="#c3a6fb" />
            <path d="M13 4l1 2.5 2.5 1-2.500 1L13 11l-1-2.500-2.500-1 2.500-1z" fill="#a77cf8" />
          </svg>
        </div>
        <div className={`${tile} bg-[#c9eaff] text-[#1aa3ff] text-[14px] font-bold`}>P</div>
        <div className={`${tile} bg-[#b8f4ea]`}>
          <svg viewBox="0 0 20 24" className="w-5 h-6" fill="none" stroke="#10cfc0" strokeWidth="2">
            <path d="M15 7h-2a4 4 0 0 0-4 4v2a4 4 0 0 0 4 4h2M9 12H6" />
            <circle cx="5" cy="12" r="2" fill="#10cfc0" />
          </svg>
        </div>
        <div className={`${tile} bg-[#ffd6e8]`}>
          <svg viewBox="0 0 20 24" className="w-5 h-6" fill="none" stroke="#f25c9a" strokeWidth="1.2">
            <path d="M6 8h8M11 8v8h3" />
            <rect x="4" y="6" width="4" height="4" rx="1" fill="#f25c9a" />
            <rect x="12" y="6" width="3.500" height="3.500" rx="1" fill="#f25c9a" />
            <rect x="13" y="14" width="4" height="4" rx="1" fill="#f25c9a" />
          </svg>
        </div>
        <div className={`${tile} bg-[#d6deff]`}>
          <svg viewBox="0 0 20 24" className="w-5 h-6">
            <path d="M4 6h12a1 1 0 0 1 1 1v9a1 1 0 0 1-1 1H9l-3 3v-3H4a1 1 0 0 1-1-1V7a1 1 0 0 1 1-1z" fill="#7d82f5" />
            <rect x="7.500" y="9" width="1.400" height="4" fill="#fff" />
            <rect x="11.500" y="9" width="1.400" height="4" fill="#fff" />
          </svg>
        </div>
        <div className="text-[#aaa]"><ChevronLeft size={16} strokeWidth={1.5} /></div>
      </div>
    </div>
  );
}

function TopRightBar() {
  const slot = "w-10 flex justify-center shrink-0";
  return (
    <div className={`absolute left-[1326px] top-[9px] w-[576px] h-[42px] rounded-[10px] text-[#333] ${bar}`}>
      <div className="w-[26px] flex justify-center text-[#aaa]"><ChevronRight size={16} strokeWidth={1.5} /></div>
      <div className={slot}>
        <svg viewBox="0 0 20 20" className="w-[20px] h-[20px]" fill="none" stroke="#333" strokeWidth="1.3" strokeLinejoin="round">
          <path d="M12 4h5v10l-3 4H5v-3" />
          <path d="M4.500 15h8.500l1 3" />
          <rect x="3" y="6" width="7" height="7" rx="1" fill="#333" />
          <path d="M4.800 6V4.500a1.700 1.700 0 0 1 3.400 0V6" />
        </svg>
      </div>
      <div className={slot}><CirclePlay size={19} strokeWidth={1.3} /></div>
      <div className={slot}><PartyPopper size={20} strokeWidth={1.3} /></div>
      <div className={slot}>
        <svg viewBox="0 0 20 20" className="w-[18px] h-[18px]" fill="none" stroke="#222" strokeWidth="1.5">
          <path d="M9.500 2h1a7.500 7.500 0 0 1 0 15H5a2.500 2.500 0 0 1-2.500-2.500v-5A7.500 7.500 0 0 1 9.500 2z" />
        </svg>
      </div>
      <div className={slot}>
        <svg viewBox="0 0 20 20" className="w-[19px] h-[19px]" fill="none" stroke="#222" strokeWidth="1.5" strokeLinecap="round">
          <path d="M10 2.500a7.500 7.500 0 1 1-6 3" />
          <path d="M10.500 11 7 5.500" />
          <path d="M14 2.500l2 2" />
        </svg>
      </div>
      <div className={slot}>
        <svg viewBox="0 0 20 20" className="w-[18px] h-[18px]" fill="none" stroke="#222" strokeWidth="1.3">
          <path d="M3 15V9h4v6M7 15V4h5v11M12 15V7h4v8" />
          <path d="M1.500 18h17" strokeWidth="1.600" />
        </svg>
      </div>
      <div className={slot}>
        <svg viewBox="0 0 20 20" className="w-5 h-5" fill="none" stroke="#333" strokeWidth="1.3" strokeLinejoin="round">
          <path d="M3 4.500 7 19l2.800-6 6-2.500z" />
          <path d="M8 2.500h10M12 5.500h6M15 8.500h3" />
        </svg>
      </div>
      <div className={slot}><ChevronsDown size={18} strokeWidth={2} /></div>
      <div className="flex items-center pl-1 pr-2 gap-[10px]">
        <Divider />
        <div className="relative w-7 h-7 rounded-full bg-[#5b6ef5] border-[1.5px] border-[#f5c97a] flex items-center justify-center text-[10px] text-white shrink-0">
          口衣
          <div className="absolute -right-[1px] -bottom-[1px] w-[9px] h-[9px] rounded-full bg-[#f5b041] border border-white" />
        </div>
        <div className="w-[90px] h-8 rounded-[5px] bg-[#7a5af8] flex items-center text-white shrink-0">
          <div className="w-[62px] flex items-center justify-center gap-[5px] text-[14px]">
            <svg viewBox="0 0 16 16" className="w-[15px] h-[15px]" fill="#fff">
              <circle cx="7" cy="4" r="3.200" />
              <path d="M1 15c0-4 2.500-6 6-6 1 0 1.800.2 2.500.5A4 4 0 0 0 9 15z" />
              <circle cx="12.500" cy="12" r="2.300" fill="none" stroke="#fff" strokeWidth="1.400" />
            </svg>
            分享
          </div>
          <div className="w-px h-8 bg-[#6a4de8]" />
          <div className="flex-1 flex justify-center"><ChevronDown size={14} strokeWidth={2} /></div>
        </div>
      </div>
      <Divider />
      <div className="flex items-center pl-2">
        <div className="relative w-8 flex justify-center">
          <Bell size={19} strokeWidth={1.4} />
          <div className="absolute left-[16px] -top-[7px] w-[13px] h-[13px] rounded-full bg-[#f03535] text-[9px] leading-[13px] text-center text-white font-bold">3</div>
        </div>
        <div className="w-8 flex justify-center"><CircleHelp size={19} strokeWidth={1.4} /></div>
      </div>
    </div>
  );
}

function LeftBar() {
  return (
    <div className="absolute left-[10px] top-[276px] w-[46px] h-[376px] rounded-[12px] bg-white shadow-[0_2px_12px_rgba(0,0,0,0.08)] flex flex-col items-center pt-2 gap-[14px]">
      <svg viewBox="0 0 32 34" className="w-8 h-[30px] shrink-0">
        <path d="M4 11 10 0l5 11z" fill="#7c5cf0" />
        <circle cx="15" cy="13" r="6" fill="#fdc84a" />
        <rect x="20" y="1" width="9" height="9" rx="1.500" transform="rotate(30 24 5)" fill="#f05cd8" />
        <rect x="3" y="12" width="26" height="20" rx="2" fill="#f5f3fc" stroke="#e6e4f2" />
        <rect x="12.500" y="20" width="7" height="3" fill="#d6d4f3" />
      </svg>
      <div className="w-8 h-px bg-[#f0f0f2]" />
      <div className="flex flex-col items-center gap-5">
        <svg viewBox="0 0 28 28" className="w-7 h-7" fill="none">
          <path d="M7 0v28M21 0v28M0 7h28M0 21h28" stroke="#b9bcc8" strokeWidth="1.200" />
          <rect x="7" y="7" width="14" height="14" stroke="#555a72" strokeWidth="1.800" fill="#fff" />
        </svg>
        <svg viewBox="0 0 28 28" className="w-7 h-7">
          <path d="M0 0h28v18L18 28H0z" fill="#fbf6c6" />
          <path d="M28 18 18 28V20a2 2 0 0 1 2-2z" fill="#fff" stroke="#eee" strokeWidth="0.500" />
        </svg>
        <svg viewBox="0 0 28 28" className="w-7 h-7" fill="none">
          <rect x="2" y="2" width="19" height="17" rx="1.500" stroke="#a2a8bb" strokeWidth="1.600" fill="#fff" />
          <circle cx="18" cy="17" r="8" stroke="#555a72" strokeWidth="1.600" fill="#fff" />
        </svg>
        <svg viewBox="0 0 28 28" className="w-7 h-7" fill="none">
          <path d="M4 22c6 1 7-3 8-7s3-8 11-8" stroke="#555a72" strokeWidth="1.800" />
          <circle cx="4" cy="22" r="2.500" fill="#4da6ff" />
          <path d="M22 4l5 3-5 3z" fill="#4da6ff" />
        </svg>
        <svg viewBox="0 0 28 28" className="w-7 h-7" fill="none">
          <path d="M13 4C8 0 1 4 2 8c1 3 7 2 6 6-1 3-5 1-5 5 0 3 4 3 6 2" stroke="#555a72" strokeWidth="1.300" />
          <path d="M12 22 23 9l4 3-11 13-5 1z" fill="#d5d6e6" stroke="#fff" />
          <path d="M23 9l2-2 3 2.500-2 2.500z" fill="#d872d8" />
        </svg>
        <svg viewBox="0 0 28 28" className="w-7 h-7" fill="none" strokeWidth="1.300">
          <path d="M1 2c5 0 6 2 7 6" stroke="#555a72" />
          <path d="M27 2c-5 0-6 2-7 6" stroke="#d872d8" />
          <path d="M1 24c5 0 6-2 7-6" stroke="#d872d8" />
          <path d="M27 24c-5 0-6-2-7-6" stroke="#555a72" />
          <rect x="6" y="8" width="16" height="10" rx="1.500" fill="#fff" stroke="#eee" />
          <rect x="9" y="11" width="10" height="4" fill="#cfd0e2" />
        </svg>
        <div className="mt-1 flex gap-1">
          <div className="w-1 h-1 rounded-full bg-[#9a9aa5]" />
          <div className="w-1 h-1 rounded-full bg-[#9a9aa5]" />
          <div className="w-1 h-1 rounded-full bg-[#9a9aa5]" />
        </div>
      </div>
    </div>
  );
}

function BottomBar() {
  const small = <ChevronDown size={12} strokeWidth={1.8} />;
  return (
    <div className={`absolute left-[1291px] top-[818px] w-[502px] h-[40px] rounded-[8px] overflow-hidden text-[#333] ${bar}`}>
      <div className="w-5 h-full bg-[#f6f6f9] grid grid-cols-2 content-center justify-center gap-[3px] px-[6px] shrink-0">
        {[0, 1, 2, 3, 4, 5].map((i) => (
          <div key={i} className="w-[2.500px] h-[2.500px] rounded-full bg-[#b5b5bd]" />
        ))}
      </div>
      <div className="flex items-center pl-3 pr-[10px] gap-2">
        <svg viewBox="0 0 18 18" className="w-[18px] h-[18px] shrink-0" fill="none" stroke="#333" strokeWidth="1.300">
          <path d="M4 1v16M14 1v16M1 4h16M1 14h16" />
        </svg>
        {small}
      </div>
      <Divider />
      <div className="flex items-center pl-[9px] pr-[11px] gap-4">
        <div className="w-5 h-5 rounded-full bg-white border border-[#dcdce0]" />
        <svg viewBox="0 0 20 20" className="w-5 h-5 shrink-0">
          <circle cx="10" cy="10" r="7.500" fill="none" stroke="#d4d4d8" strokeWidth="4" strokeDasharray="3 1.500" />
        </svg>
        <svg viewBox="0 0 20 20" className="w-5 h-5 shrink-0" fill="none" stroke="#333" strokeWidth="1.300">
          <circle cx="10" cy="10" r="8" />
          <path d="M6 15c3 0 3-2 5-3s3-2 3-3c0-2-2-5-4-7" />
          <path d="M11 5l3 1M11 8l4 1M9 11l5 0" stroke="#777" />
        </svg>
      </div>
      <Divider />
      <div className="flex items-center pl-[9px] pr-[10px] gap-4">
        <svg viewBox="0 0 20 20" className="w-5 h-5 shrink-0" fill="none" stroke="#333" strokeWidth="1.300">
          <rect x="2" y="2" width="16" height="16" rx="2.500" />
          <path d="M5.500 8V5.500H8M12 5.500h2.500V8M14.500 12v2.500H12M8 14.500H5.500V12" />
        </svg>
        <svg viewBox="0 0 20 20" className="w-5 h-5 shrink-0" fill="none" stroke="#333" strokeWidth="1.200">
          <path d="M4 2h12M1 8h4M3 8v9M1 17h4" />
          <rect x="8" y="6" width="10" height="11" rx="1" />
        </svg>
      </div>
      <Divider />
      <div className="flex items-center pl-[9px] pr-[10px] gap-[9px]">
        <Eye size={22} strokeWidth={1.3} />
        {small}
      </div>
      <Divider />
      <div className="flex items-center pl-[10px] gap-4">
        <svg viewBox="0 0 20 20" className="w-5 h-5 shrink-0" fill="none" stroke="#333" strokeWidth="1.300">
          <circle cx="13" cy="3.500" r="1.800" />
          <circle cx="5" cy="9" r="1.800" />
          <circle cx="15" cy="10" r="1.800" />
          <circle cx="8" cy="16.500" r="1.800" />
          <path d="M11.500 4.500 6.500 8M6.800 9.200h6.400M13.500 11.200 9.500 15.300" />
        </svg>
        <div className="flex items-center gap-[9px]">
          <LockOpen size={19} strokeWidth={1.3} />
          {small}
        </div>
        <svg viewBox="0 0 20 20" className="w-5 h-5 shrink-0" fill="none" stroke="#333" strokeWidth="1.300">
          <path d="M2.500 10C5 6 15 6 17.500 10 15 14 5 14 2.500 10z" />
          <circle cx="10" cy="10" r="1.800" fill="#333" />
          <path d="M3 2l3 3M17 2l-3 3M3 18l3-3M17 18l-3-3" strokeWidth="1.600" />
        </svg>
        <Ellipsis size={18} strokeWidth={2} />
      </div>
    </div>
  );
}

function ZoomBars() {
  return (
    <div className="absolute left-[1565px] top-[877px] flex gap-[10px]">
      <div className={`w-[93px] h-[42px] rounded-[8px] pl-[13px] gap-[13.500px] ${bar}`}>
        <svg viewBox="0 0 20 20" className="w-5 h-5" fill="none" stroke="#333" strokeWidth="1.500" strokeLinecap="round" strokeLinejoin="round">
          <path d="M7 3 2.500 8l4.500 4" />
          <path d="M2.500 8H10c4 0 6 3 6 9" />
        </svg>
        <Divider />
        <svg viewBox="0 0 20 20" className="w-5 h-5" fill="none" stroke="#d6d6da" strokeWidth="1.500" strokeLinecap="round" strokeLinejoin="round">
          <path d="M13 3 17.500 8 13 12" />
          <path d="M17.500 8H10c-4 0-6 3-6 9" />
        </svg>
      </div>
      <div className={`w-[234px] h-[42px] rounded-[8px] pl-[6px] gap-2 text-[#333] ${bar}`}>
        <div className="w-8 h-8 rounded-[3px] bg-[#efeafd] flex items-center justify-center">
          <svg viewBox="0 0 18 18" className="w-[18px] h-[18px]" fill="none" stroke="#6a4de8" strokeWidth="1.400" strokeLinejoin="round">
            <path d="M3.500 2 15 9.500 9.500 11 7.500 16.500z" />
          </svg>
        </div>
        <Divider />
        <div className="flex items-center pl-[6px] gap-[17px]">
          <ZoomOut size={18} strokeWidth={1.5} />
          <div className="flex items-center gap-[9.500px]">
            <div className="w-[26px] text-[13px] font-['Roboto',sans-serif] text-[#444]">26%</div>
            <ChevronDown size={12} strokeWidth={1.8} />
            <ZoomIn size={18} strokeWidth={1.5} />
          </div>
          <Divider />
        </div>
        <div className="ml-[5px]"><MapIcon size={19} strokeWidth={1.4} /></div>
      </div>
    </div>
  );
}

export default function App() {
  return (
    <div className="relative w-[1912px] h-[928px] overflow-hidden bg-[#f3f3f6] font-['Noto_Sans_CJK_SC','Noto_Sans',sans-serif]">
      <div className="absolute inset-0 bg-[radial-gradient(circle,#d6d6dc_1px,transparent_1.2px)] bg-[size:16.4px_16.4px] bg-[position:3.800px_1.100px]" />

      <FrameOne />
      <FrameTwo />
      <FrameThree />

      <TopLeftBar />
      <TopRightBar />
      <LeftBar />
      <BottomBar />
      <ZoomBars />

      {/* right side panel */}
      <div className="absolute left-[1859px] top-[402px] w-[44px] h-[124px] rounded-[10px] bg-white shadow-[0_2px_12px_rgba(0,0,0,0.06)] flex flex-col items-center justify-between py-[12px] text-[#333]">
        <WandSparkles size={18} strokeWidth={1.3} />
        <PictureInPicture2 size={18} strokeWidth={1.3} />
        <Info size={18} strokeWidth={1.3} />
      </div>

      {/* templates corner button */}
      <div className="absolute left-[10px] top-[877px] w-[45px] h-[43px] rounded-[8px] bg-white shadow-[0_2px_10px_rgba(0,0,0,0.06)] flex items-center justify-center">
        <svg viewBox="0 0 20 20" className="w-5 h-5" fill="none" stroke="#333" strokeWidth="1.300">
          <rect x="2" y="3" width="16" height="13" rx="1.500" />
          <path d="M5 7h4M5 10h3" />
          <path d="M14 10.500v4M12 12.500h4" />
        </svg>
      </div>

      {/* bits of the desktop behind the window corners */}
      <div className="absolute left-0 top-0 w-[7px] h-[7px] bg-[#2dc7b2] rounded-br-full" />
      <div className="absolute right-0 top-0 w-[7px] h-[7px] bg-[#2dc7b2] rounded-bl-full" />
      <div className="absolute right-0 top-[803px] w-[5px] h-[30px] bg-[#5a6a75]" />
      <div className="absolute right-0 top-[833px] w-[5px] h-[24px] bg-[#2fa8e0]" />
      <div className="absolute left-[1904px] top-[846px] w-[10px] h-[12px] rounded-full bg-[#2fa8e0] border border-[#5a6a75]" />
      <div className="absolute right-0 bottom-0 w-[7px] h-[7px] bg-[#2dc7b2] rounded-tl-full" />
    </div>
  );
}
